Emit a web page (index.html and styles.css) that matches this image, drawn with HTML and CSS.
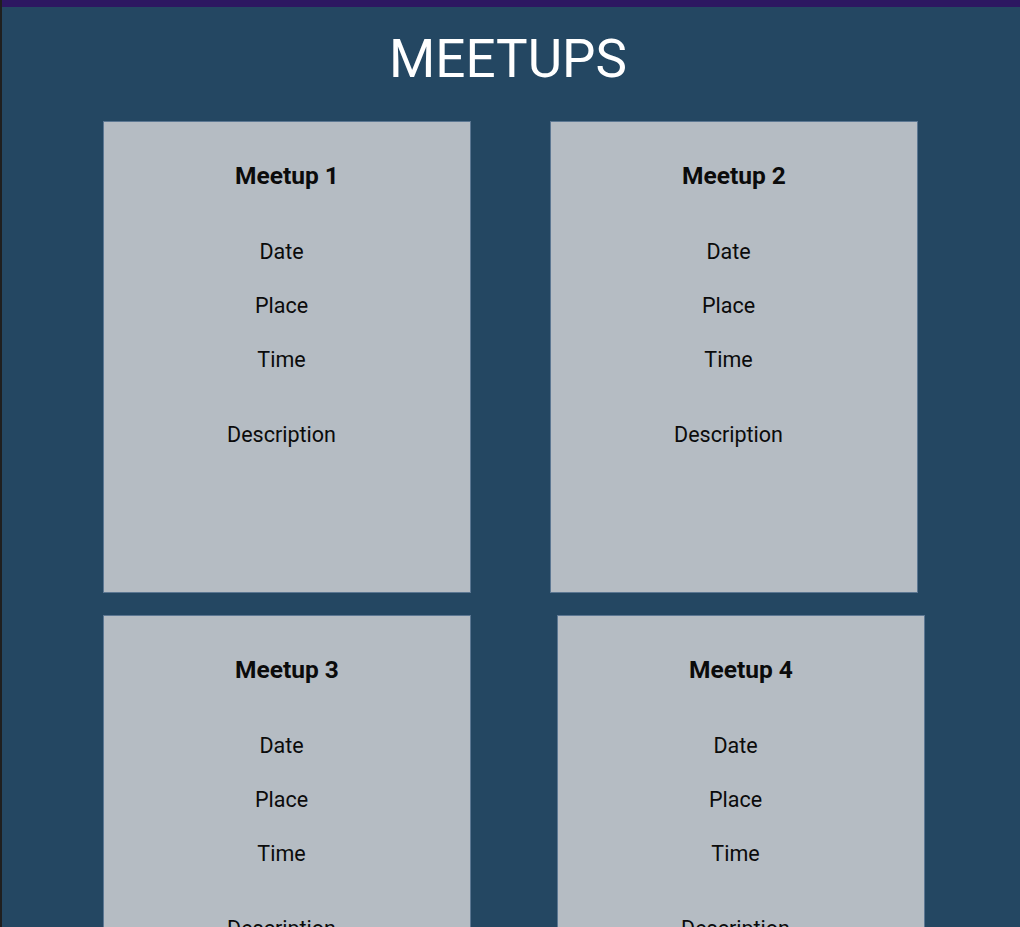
FILE: index.html
```html
<!DOCTYPE html>
<html lang="en">
<head>
<meta charset="utf-8">
<title>Meetups</title>
<link rel="stylesheet" href="styles.css">
</head>
<body>
<div class="topbar"></div>
<main class="page">
  <h1 class="title">MEETUPS</h1>
  <div class="row">
    <section class="card">
      <h2 class="card-title">Meetup 1</h2>
      <p class="field field-first">Date</p>
      <p class="field">Place</p>
      <p class="field">Time</p>
      <p class="field field-desc">Description</p>
    </section>
    <section class="card">
      <h2 class="card-title">Meetup 2</h2>
      <p class="field field-first">Date</p>
      <p class="field">Place</p>
      <p class="field">Time</p>
      <p class="field field-desc">Description</p>
    </section>
  </div>
  <div class="row row-second">
    <section class="card">
      <h2 class="card-title">Meetup 3</h2>
      <p class="field field-first">Date</p>
      <p class="field">Place</p>
      <p class="field">Time</p>
      <p class="field field-desc">Description</p>
    </section>
    <section class="card">
      <h2 class="card-title">Meetup 4</h2>
      <p class="field field-first">Date</p>
      <p class="field">Place</p>
      <p class="field">Time</p>
      <p class="field field-desc">Description</p>
    </section>
  </div>
</main>
</body>
</html>
```
FILE: styles.css
```css
html, body {
  margin: 0;
  padding: 0;
}
body {
  background: #244762;
  border-left: 2px solid #1f1f1f;
  min-height: 927px;
  font-family: Roboto, "Liberation Sans", sans-serif;
  overflow: hidden;
}
.topbar {
  height: 7px;
  background: #2d1761;
}
.title {
  margin: 0;
  padding-right: 6px;
  height: 114px;
  line-height: 104px;
  font-size: 53px;
  font-weight: 400;
  color: #ffffff;
  text-align: center;
}
.row {
  display: flex;
  gap: 79px;
  padding-left: 101px;
  margin-bottom: 22px;
}
.row-second {
  gap: 86px;
}
.card {
  box-sizing: border-box;
  width: 368px;
  height: 472px;
  background: #b5bcc3;
  border: 1px solid #5c7792;
  padding-top: 39px;
  text-align: center;
  color: #0b0b0b;
}
.card-title {
  margin: 0;
  font-size: 24.5px;
  line-height: 30px;
  font-weight: 700;
}
.field {
  margin: 24px 11px 0 0;
  font-size: 21.5px;
  line-height: 30px;
}
.field-first {
  margin-top: 46px;
}
.field-desc {
  margin-top: 45px;
}
```
